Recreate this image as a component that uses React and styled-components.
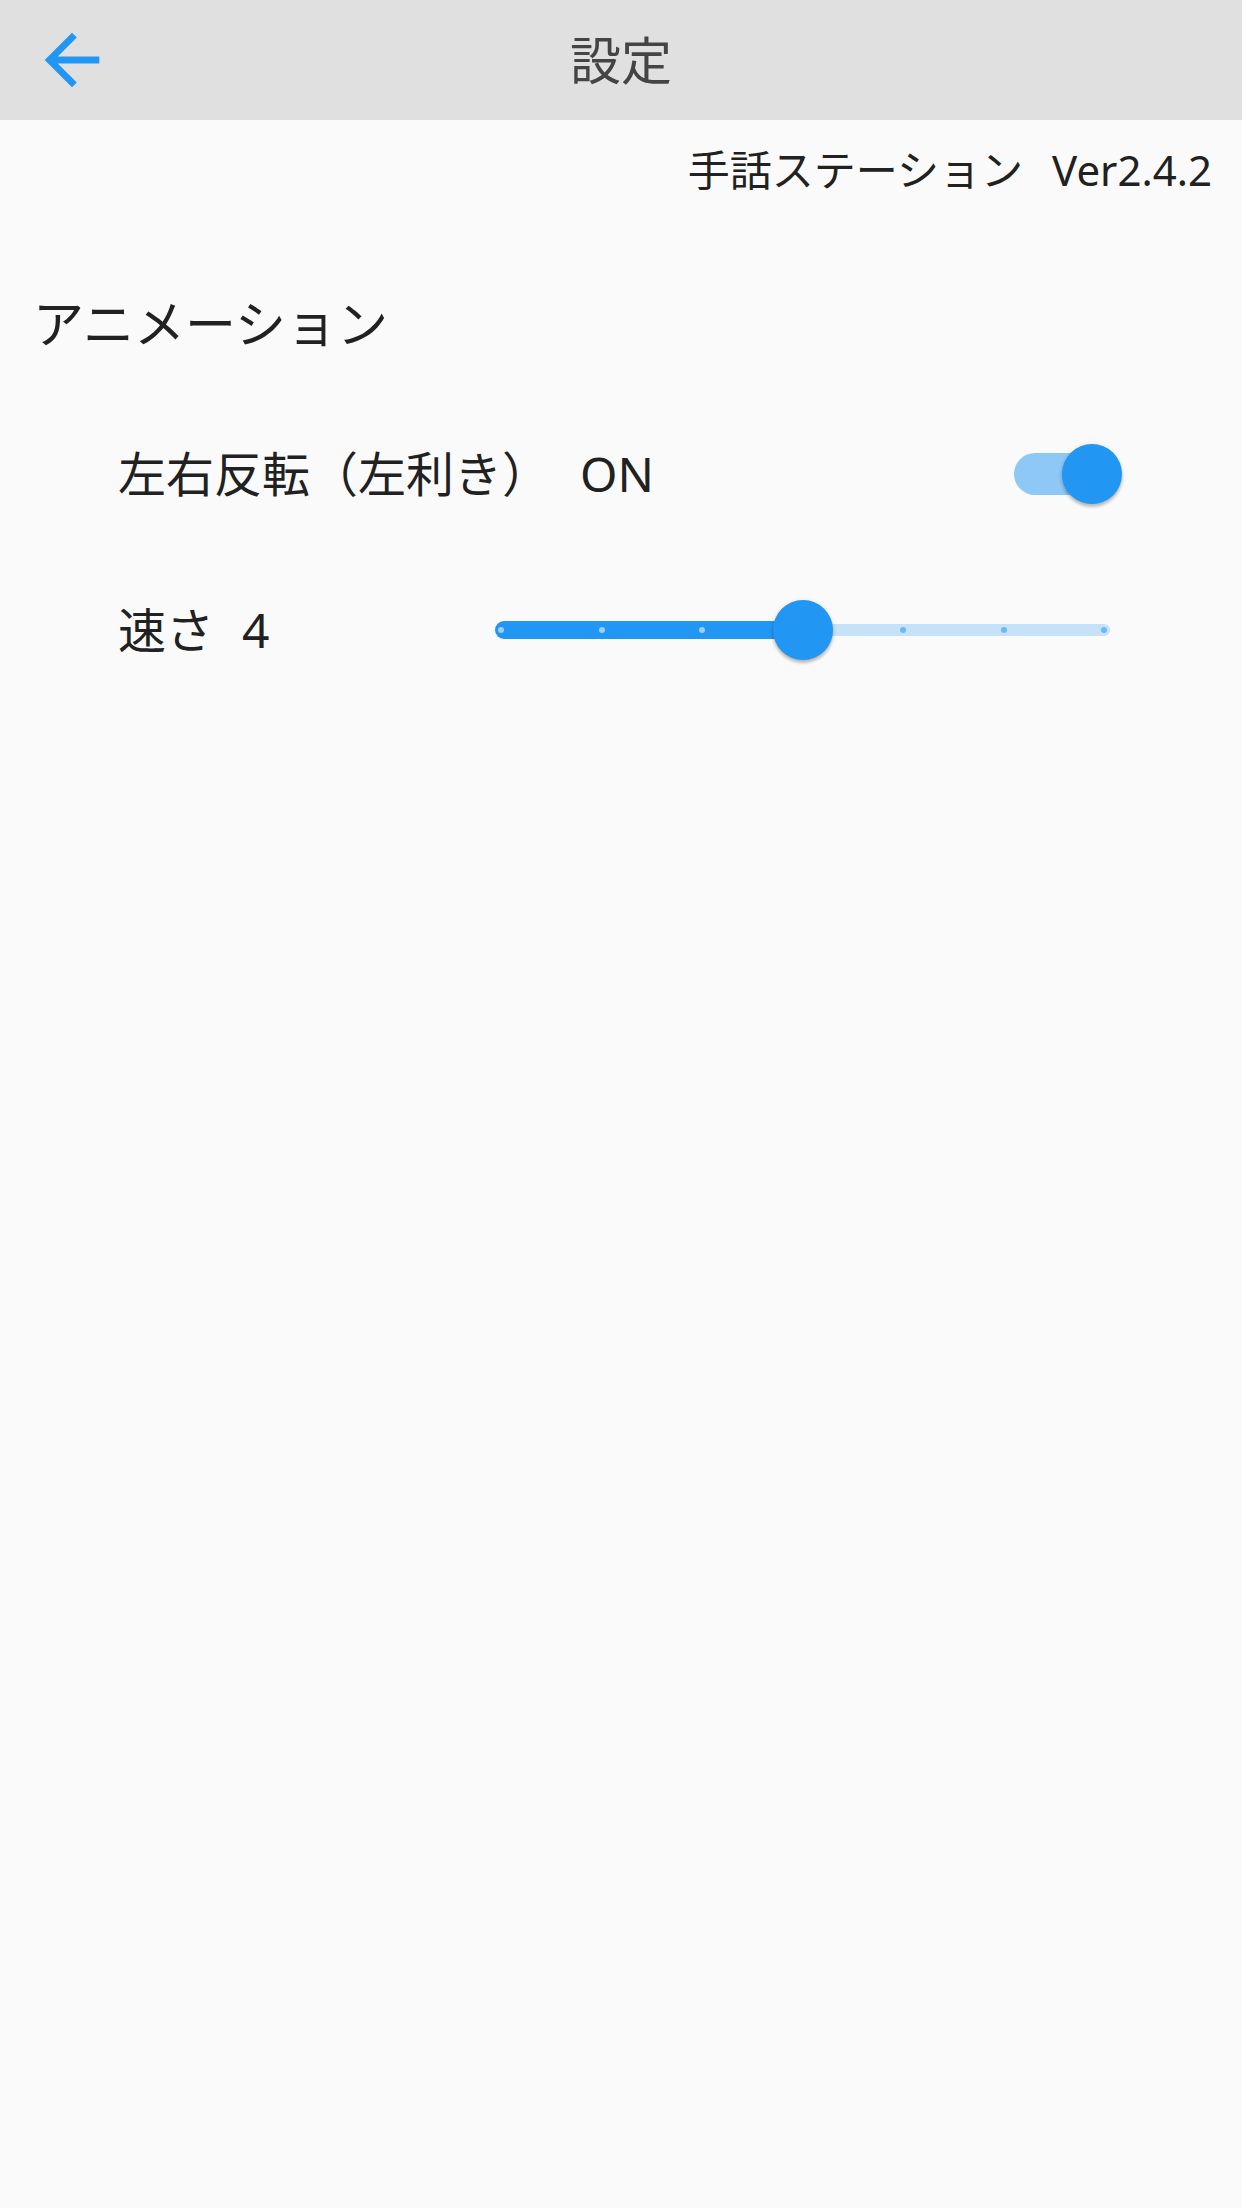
import React from "react";
import styled, { createGlobalStyle } from "styled-components";

const GlobalStyle = createGlobalStyle`
  html, body {
    margin: 0;
    padding: 0;
    background: #fafafa;
  }
  body {
    font-family: "Noto Sans", "Noto Sans CJK JP", sans-serif;
    color: #212121;
  }
`;

const Page = styled.div`
  min-height: 2208px;
  background: #fafafa;
`;

const AppBar = styled.header`
  display: grid;
  grid-template-columns: 1fr auto 1fr;
  align-items: center;
  height: 120px;
  padding-left: 31px;
  background: #e0e0e0;
`;

const BackButton = styled.button`
  justify-self: start;
  display: flex;
  width: 82px;
  height: 82px;
  padding: 0;
  border: none;
  background: none;
`;

const Title = styled.h1`
  margin: 0 0 0 -31px;
  font-size: 51px;
  font-weight: 400;
  color: #444;
  line-height: 1;
`;

const Version = styled.div`
  display: flex;
  align-items: center;
  justify-content: flex-end;
  gap: 29px;
  height: 100px;
  padding-right: 30px;
  font-size: 42px;
  line-height: 1;
`;

const Section = styled.h2`
  display: flex;
  align-items: center;
  height: 100px;
  margin: 53px 0 0;
  padding-left: 33px;
  font-size: 51px;
  font-weight: 400;
  line-height: 1;
`;

const List = styled.div`
  display: flex;
  flex-direction: column;
  margin-top: 23px;
`;

const Row = styled.div`
  display: flex;
  align-items: center;
  justify-content: space-between;
  height: 156px;
  padding-left: 118px;
  padding-right: ${(p) => p.inset}px;
  font-size: 48px;
  line-height: 1;
`;

const Label = styled.span`
  display: flex;
  gap: ${(p) => p.gap}px;
`;

const SwitchBox = styled.div`
  display: flex;
  align-items: center;
`;

const SwitchTrack = styled.div`
  width: 99px;
  height: 42px;
  border-radius: 21px;
  background: ${(p) => (p.on ? "#8dc8f6" : "#bdbdbd")};
`;

const Knob = styled.div`
  position: relative;
  z-index: 1;
  flex: none;
  width: 60px;
  height: 60px;
  border-radius: 50%;
  background: #2196f3;
  box-shadow: 0 3px 3px rgba(0, 0, 0, 0.2), 0 1px 5px rgba(0, 0, 0, 0.12);
`;

const SwitchKnob = styled(Knob)`
  margin-left: ${(p) => (p.on ? -51 : -99)}px;
`;

const SliderBox = styled.div`
  position: relative;
  display: flex;
  align-items: center;
  width: 615px;
  height: 60px;
`;

const ActiveTrack = styled.div`
  flex: none;
  height: 18px;
  border-radius: 9px 0 0 9px;
  background: #2196f3;
`;

const SliderKnob = styled(Knob)`
  margin: 0 -30px;
`;

const InactiveTrack = styled.div`
  flex: 1;
  height: 12px;
  border-radius: 0 6px 6px 0;
  background: #c6e2f8;
`;

const Ticks = styled.div`
  position: absolute;
  inset: 0 3px;
  display: flex;
  align-items: center;
  justify-content: space-between;
  pointer-events: none;
`;

const Tick = styled.span`
  width: 6px;
  height: 6px;
  border-radius: 50%;
  background: ${(p) => (p.active ? "#99cff9" : "#6db9f5")};
`;

const ArrowBack = () => (
  <svg width="82" height="82" viewBox="0 0 24 24">
    <path
      fill="#2196f3"
      d="M20 11H7.83l5.59-5.59L12 4l-8 8 8 8 1.41-1.41L7.83 13H20v-2z"
    />
  </svg>
);

const Switch = ({ on }) => (
  <SwitchBox>
    <SwitchTrack on={on} />
    <SwitchKnob on={on} />
  </SwitchBox>
);

const Slider = ({ value, min, max }) => {
  const steps = [];
  for (let v = min; v <= max; v++) steps.push(v);
  const x = 6 + ((value - min) / (max - min)) * 603;
  return (
    <SliderBox>
      <Ticks>
        {steps.map((v) => (
          <Tick key={v} active={v <= value} />
        ))}
      </Ticks>
      <ActiveTrack style={{ width: x }} />
      <SliderKnob />
      <InactiveTrack />
    </SliderBox>
  );
};

const App = () => {
  const mirrored = true;
  const speed = 4;

  return (
    <Page>
      <GlobalStyle />
      <AppBar>
        <BackButton aria-label="戻る">
          <ArrowBack />
        </BackButton>
        <Title>設定</Title>
      </AppBar>
      <Version>
        <span>手話ステーション</span>
        <span>Ver2.4.2</span>
      </Version>
      <Section>アニメーション</Section>
      <List>
        <Row inset={120}>
          <Label gap={30}>
            <span>左右反転（左利き）</span>
            <span>{mirrored ? "ON" : "OFF"}</span>
          </Label>
          <Switch on={mirrored} />
        </Row>
        <Row inset={132}>
          <Label gap={28}>
            <span>速さ</span>
            <span>{speed}</span>
          </Label>
          <Slider value={speed} min={1} max={7} />
        </Row>
      </List>
    </Page>
  );
};

export default App;
